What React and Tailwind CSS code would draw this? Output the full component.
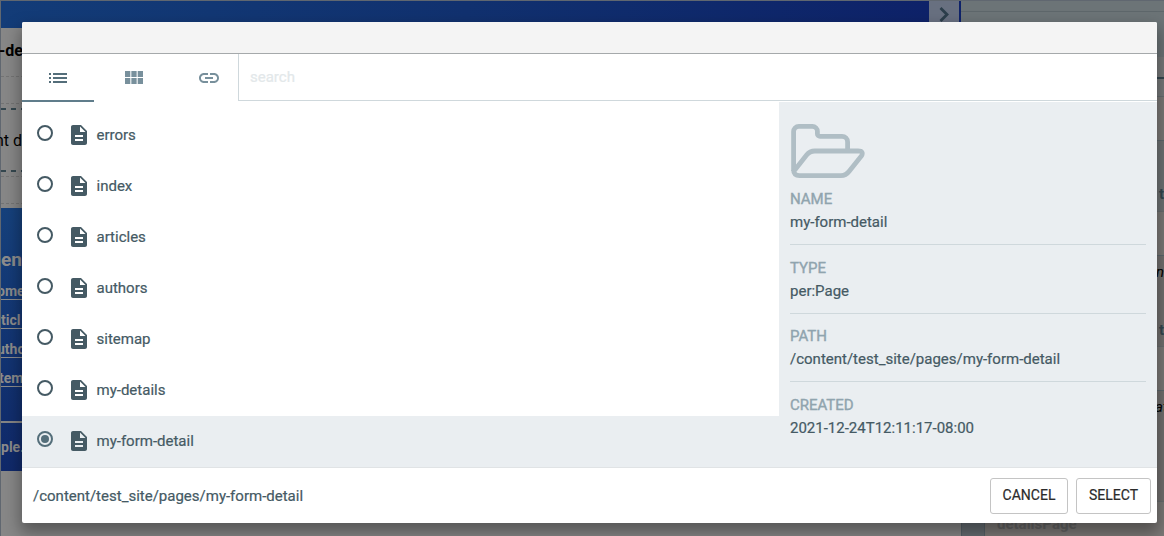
import { MdDescription, MdLink, MdList } from "react-icons/md";

const pages = ["errors", "index", "articles", "authors", "sitemap", "my-details", "my-form-detail"];
const selected = "my-form-detail";

const details = [
  ["name", "my-form-detail"],
  ["type", "per:Page"],
  ["path", "/content/test_site/pages/my-form-detail"],
  ["created", "2021-12-24T12:11:17-08:00"],
];

function Radio({ checked }) {
  return (
    <span
      className={
        "flex size-4 shrink-0 items-center justify-center rounded-full border-2 " +
        (checked ? "border-[#546e7a]" : "border-[#455a64]")
      }
    >
      {checked && <span className="size-2 rounded-full bg-[#546e7a]" />}
    </span>
  );
}

function GridIcon() {
  return (
    <svg width="18" height="13" viewBox="4 5 17 13" preserveAspectRatio="none" fill="currentColor">
      <path d="M4 11h5V5H4v6zm0 7h5v-6H4v6zm6 0h5v-6h-5v6zm6 0h5v-6h-5v6zm-6-7h5V5h-5v6zm6-6v6h5V5h-5z" />
    </svg>
  );
}

function FolderOpen() {
  return (
    <svg width="76" height="56" viewBox="0 0 76 56" fill="none" stroke="#b0bec5" strokeWidth="4.8" className="block">
      <path d="M3.6 48V8.6a5.2 5.2 0 0 1 5.2-5.2h13.6a5 5 0 0 1 5 5v2.4a2.6 2.6 0 0 0 2.6 2.6h22a5.6 5.6 0 0 1 5.6 5.6v9" />
      <path d="M4.4 47.4 16.6 32q3.2-4 8.2-4H68q6.2 0 3.4 5L59.4 48q-3.5 4.6-8.4 4.6H9.5Q3.6 52.6 3.6 47" />
    </svg>
  );
}

function Dashes() {
  return <div className="h-0.5 bg-[repeating-linear-gradient(90deg,#34474f_0_5px,transparent_5px_10px)]" />;
}

function SiteNav() {
  return (
    <div className="flex h-[263px] flex-col overflow-hidden bg-linear-to-b from-[#16417c] to-[#10296a] text-sm leading-[15px] font-bold whitespace-nowrap text-[#8c8c8c]">
      <div className="h-[76px] pt-[41px] text-[19px] leading-[22px]">en</div>
      <div className="mb-[13px] flex h-4 w-6 border-b border-[#8c8c8c]"><span className="-ml-1">ome</span></div>
      <div className="mb-[13px] h-4 w-6 border-b border-[#8c8c8c]">ticl</div>
      <div className="mb-[13px] flex h-4 w-6 border-b border-[#8c8c8c]"><span className="-ml-1">utho</span></div>
      <div className="mb-[13px] flex h-4 w-6 border-b border-[#8c8c8c]"><span className="-ml-0.5">tem</span></div>
      <div className="mt-[21px] h-[50px] border-t-2 border-[#858585] pt-[15px] leading-[18px]">ple.</div>
    </div>
  );
}

function Background() {
  return (
    <div className="flex h-full border-t border-[#606770] bg-[#878787]">
      <div className="flex w-[929px] flex-col border-l border-[#606770]">
        <div className="h-[27px] bg-linear-to-r from-[#133c78] via-[#11316f] to-[#0e2269]" />
        <div className="flex h-12 items-center pb-0.5 text-base font-bold text-black"><span className="-ml-0.5">-de</span></div>
        <div className="h-7 border-y border-dashed border-[#747474]" />
        <div className="h-1" />
        <Dashes />
        <div className="flex h-[60px] items-center pt-0.5 text-base whitespace-nowrap text-black"><span className="-ml-1.5">nt d</span></div>
        <Dashes />
        <div className="mt-1 h-7 border-y border-dashed border-[#747474]" />
        <div className="h-1" />
        <SiteNav />
      </div>
      <div className="flex h-8 w-[30px] justify-center bg-[#687080] pt-[6px]">
        <svg width="12" height="16" viewBox="0 0 12 16" fill="none" stroke="#2c3e4b" strokeWidth="2.8"><path d="m2.5 1 6.5 6.5-6.5 6.5" /></svg>
      </div>
      <div className="h-8 w-0.5 bg-[#0e2269]" />
      <div className="flex w-[203px] flex-col items-stretch bg-[#7c7977] text-[15px]">
        <div className="h-[10px] bg-[#6c7477]" />
        <div className="h-[46px] border-t border-[#5e676b] bg-[#6c7477]" />
        <div className="h-[39px] bg-[#77797a] pt-5"><div className="ml-auto w-2 border-t-2 border-dashed border-[#34474f]" /></div>
        <div className="h-11 border-t border-[#666d70]" />
        <div className="flex h-[71px] items-end justify-end border-t border-[#5d686d] bg-[#6e7274] pb-1.5 font-bold text-[#34474f]">t</div>
        <div className="h-11 border-t border-[#696d6f]" />
        <div className="flex h-[91px] flex-col items-end justify-between border-t border-[#5d686d] bg-[#72706f] pt-1.5 pb-1.5 leading-5 text-black"><i>in</i><b className="text-[#34474f]">t</b></div>
        <div className="h-11 border-t border-[#696d6f]" />
        <div className="h-[111px] border-t border-[#5d686d] bg-[#72706f] pt-1.5 leading-5 text-black italic"><span className="ml-[194px]">at</span></div>
        <div className="flex grow border-t border-[#696d6f]">
          <div className="w-6 border-x border-[#566168] bg-[#656c71]" />
          <div className="pt-3 pl-3 leading-5 font-bold text-[#636363]">detailsPage</div>
        </div>
      </div>
    </div>
  );
}

function PathDialog() {
  return (
    <div className="absolute top-[22px] left-[22px] flex h-[501px] w-[1135px] flex-col overflow-hidden rounded-[2px] bg-white text-[15px] text-[#455a64] shadow-[0_8px_16px_2px_rgba(0,0,0,0.35)] [-webkit-text-stroke:0.2px]">
      <div className="h-8 shrink-0 border-b border-[#a5a9ab] bg-[#f4f4f4]" />
      <div className="flex h-12 shrink-0">
        <div className="flex h-12 w-[72px] items-center justify-center border-b-2 border-[#607d8b] pt-px text-[#546e7a]"><MdList size={24} /></div>
        <div className="flex w-20 items-center justify-center pb-px text-[#78909c]"><GridIcon /></div>
        <div className="flex w-16 items-center justify-center pl-[6px] text-[#78909c]"><MdLink size={24} strokeWidth="0" /></div>
        <input placeholder="search" className="h-[47px] grow border-b border-l border-[#cfd8dc] pb-px pl-[11px] outline-none placeholder:text-[#e3e8ea]" />
      </div>
      <div className="flex h-[365px] shrink-0">
        <div className="w-[757px] pt-2">
          {pages.map((page) => (
            <div key={page} className={"flex h-[51px] items-center pl-[15px] " + (page === selected ? "bg-[#eaeef1]" : "")}>
              <span className="pb-[5px]"><Radio checked={page === selected} /></span>
              <MdDescription size={24} strokeWidth="0" className="mr-[5.5px] mb-0.5 ml-[14px]" />
              {page}
            </div>
          ))}
        </div>
        <div className="grow bg-[#eaeef1] pt-[21px] pr-[11px] pl-[11px]">
          <FolderOpen />
          <dl className="mt-[9px]">
            {details.map(([label, value]) => (
              <div key={label} className="mb-[11.5px] h-[57px] border-b border-[#cfd8dc] last:border-0">
                <dt className="leading-[23px] text-[#90a4ae] uppercase [-webkit-text-stroke:0.4px]">{label}</dt>
                <dd className="leading-[22px]">{value}</dd>
              </div>
            ))}
          </dl>
        </div>
      </div>
      <div className="flex grow items-center gap-2 border-t border-[#e0e3e5] pr-1.5 pl-[11px]">
        <span className="mt-0.5 mr-auto">{"/content/test_site/pages/my-form-detail"}</span>
        <button className="h-9 w-[78px] rounded-[3px] border border-[#c4c4c4] pb-0.5 text-sm text-[#2b2b2b]">CANCEL</button>
        <button className="h-9 w-[75px] rounded-[3px] border border-[#c4c4c4] pb-0.5 text-sm text-[#2b2b2b]">SELECT</button>
      </div>
    </div>
  );
}

export default function App() {
  return (
    <main className="relative h-[536px] w-[1164px] overflow-hidden font-[Roboto,sans-serif]">
      <Background />
      <PathDialog />
    </main>
  );
}
